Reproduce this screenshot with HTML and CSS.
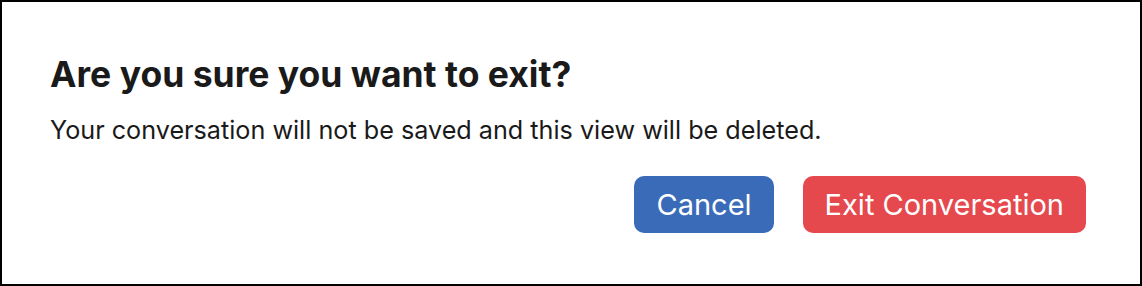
FILE: index.html
```html
<!DOCTYPE html>
<html>
<head>
<meta charset="utf-8">
<link rel="stylesheet" href="styles.css">
</head>
<body>
<div class="dialog">
  <h1 class="title">Are you sure you want to exit?</h1>
  <p class="message">Your conversation will not be saved and this view will be deleted.</p>
  <div class="actions">
    <button class="btn btn-cancel">Cancel</button>
    <button class="btn btn-exit">Exit Conversation</button>
  </div>
</div>
</body>
</html>
```

FILE: styles.css
```css
html, body {
  margin: 0;
  padding: 0;
  background: #ffffff;
}
body {
  font-family: Inter, "Noto Sans", sans-serif;
  color: #1a1a1a;
}
.dialog {
  box-sizing: border-box;
  width: 1142px;
  height: 286px;
  border: 2px solid #000000;
  padding: 53px 54px 0 48px;
}
.title {
  margin: 0;
  font-size: 35.5px;
  font-weight: 700;
  line-height: 40px;
  color: #1a1a1a;
}
.message {
  margin: 20px 0 0 0;
  font-size: 25.2px;
  line-height: 30px;
  color: #1a1a1a;
}
.actions {
  display: flex;
  justify-content: flex-end;
  gap: 29px;
  margin-top: 31px;
}
.btn {
  font-family: Inter, "Noto Sans", sans-serif;
  font-size: 29px;
  line-height: 34px;
  color: #ffffff;
  border: none;
  border-radius: 10px;
  height: 57px;
  padding: 0 22px;
}
.btn-cancel {
  background: #3a6bb9;
}
.btn-exit {
  background: #e5484d;
}
```
